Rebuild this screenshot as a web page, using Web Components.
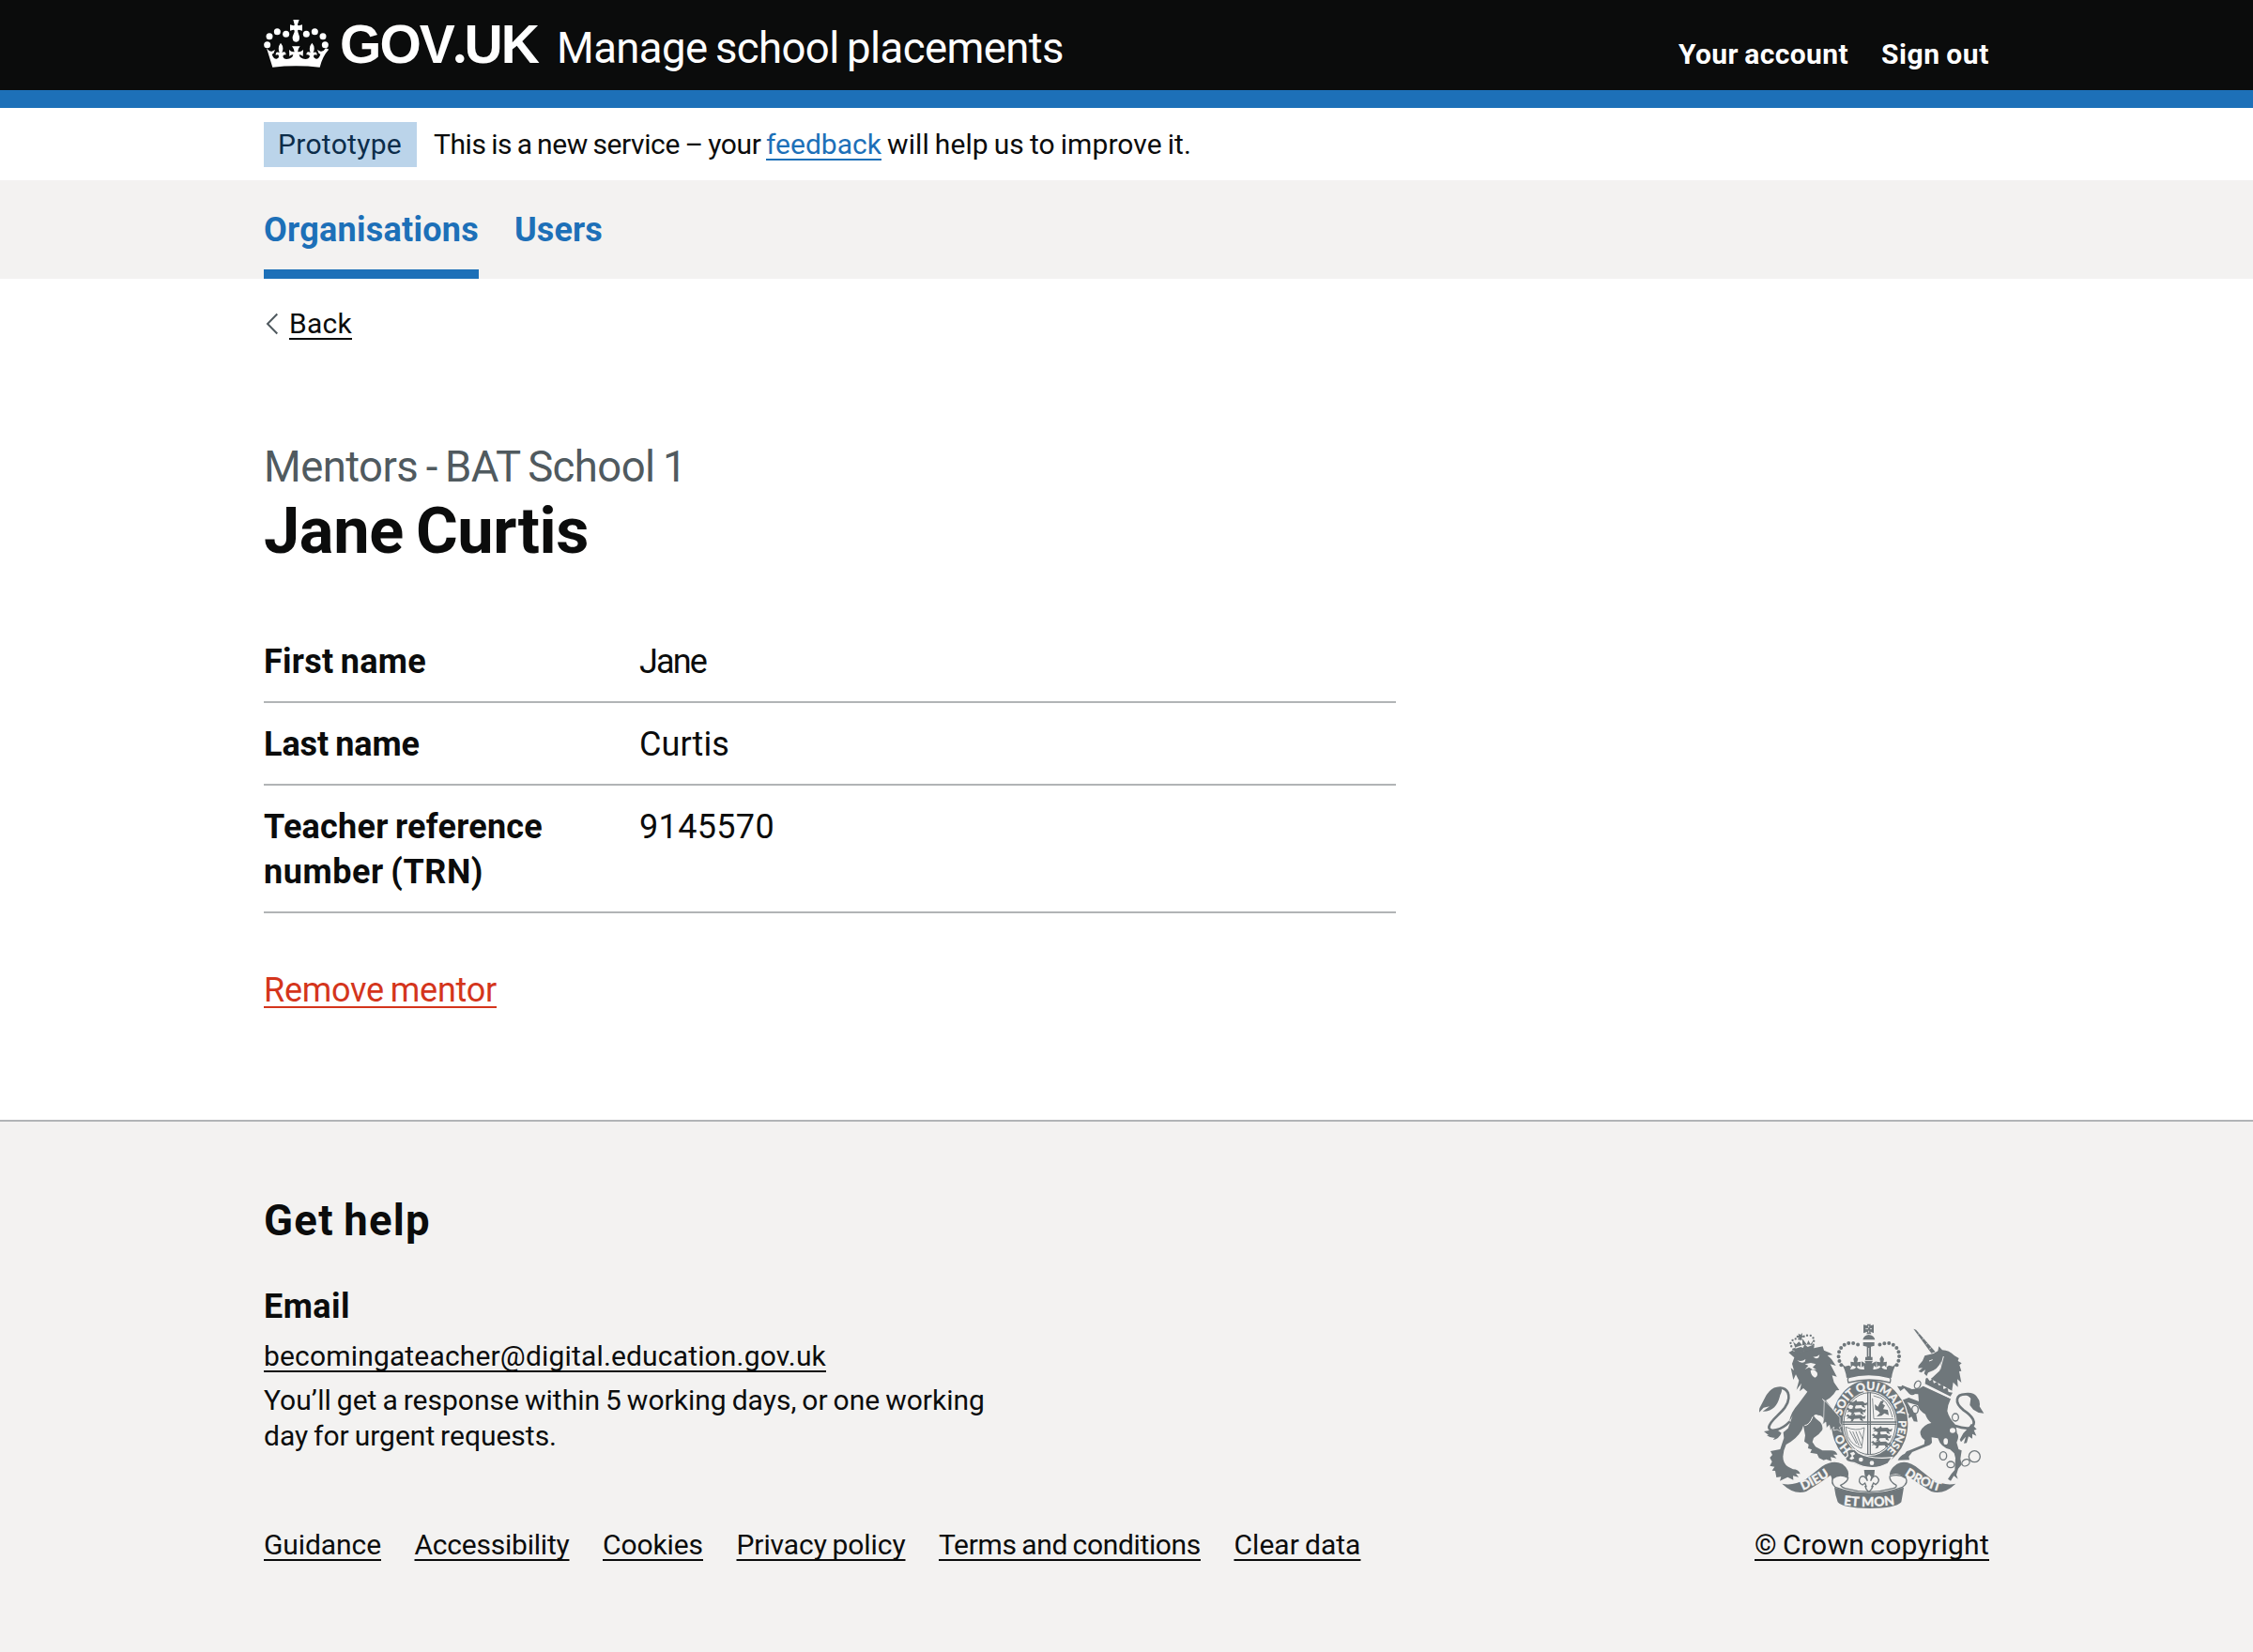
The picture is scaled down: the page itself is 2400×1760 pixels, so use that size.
<!DOCTYPE html>
<html lang="en">
<head>
<meta charset="utf-8">
<title>Jane Curtis - Manage school placements</title>
<style>
body { margin: 0; background: #fff; color: #0b0c0c; font-family: Roboto, "Liberation Sans", sans-serif; font-size: 36px; }
</style>
</head>
<body>
<placements-page></placements-page>

<script>
const define = (name, html, setup) => {
  const template = document.createElement('template');
  template.innerHTML = html.trim();
  customElements.define(name, class extends HTMLElement {
    constructor() {
      super();
      this.attachShadow({ mode: 'open' }).append(template.content.cloneNode(true));
    }
    connectedCallback() { if (setup) setup.call(this, this.shadowRoot); }
  });
};

/* A single line of text tracked to a given measure. */
define('fit-text', `
<style>
:host { display: inline-block; flex: none; }
span { display: inline-block; white-space: pre; vertical-align: top; word-spacing: -0.05em; }
:host([link]) span { text-decoration: underline; text-decoration-thickness: 2px; text-underline-offset: var(--uo, 5px); text-decoration-skip-ink: none; }
</style><span><slot></slot></span>`, function (root) {
  const span = root.querySelector('span');
  const target = +this.getAttribute('w');
  const count = this.textContent.length;
  const spacing = (target - span.getBoundingClientRect().width) / count;
  span.style.letterSpacing = spacing.toFixed(3) + 'px';
});

define('crown-logo', `
<style>:host { display: block; width: 69px; height: 51px; flex: none; } svg { display: block; width: 100%; height: 100%; }</style>
<svg viewBox="32 62 207 153" fill="#fff">
  <circle cx="43" cy="142" r="10.5"/><circle cx="50" cy="115" r="10.5"/><circle cx="75" cy="100" r="10.5"/><circle cx="103" cy="108" r="10.5"/>
  <circle cx="228" cy="142" r="10.5"/><circle cx="221" cy="115" r="10.5"/><circle cx="195" cy="100" r="10.5"/><circle cx="168" cy="108" r="10.5"/>
  <path d="M126 62H145L140 77Q140 81 144 81L155 78V97L143 94Q139 94 141 101L146 116Q148 133 135 133Q122 133 124 116L130 101Q131 94 127 94L116 97V78L127 81Q131 81 130 77Z"/>
  <path d="M60 214L41 153Q50 166 58 163L68 158L63 170L58 172Q63 188 73 187Q81 185 80 178Q79 172 70 175Q70 161 82 167Q75 150 86 136Q98 150 90 167Q102 161 103 174Q94 172 93 179Q95 188 105 188Q124 187 126 174Q119 173 114 179L113 158Q119 166 130 165Q130 157 122 147H148Q140 157 141 165Q151 166 158 158L157 179Q151 173 145 174Q147 187 165 188Q176 188 179 179Q178 172 168 174Q169 161 181 167Q174 150 186 136Q198 150 190 167Q202 161 202 175Q193 172 191 178Q190 185 199 187Q208 188 213 172L208 170L203 158L213 163Q222 166 230 153L240 157Q220 178 211 214Q135 206 60 214Z"/>
</svg>`);

define('royal-arms', `
<style>
:host { display: block; width: 240px; height: 198px; }
svg { display: block; width: 100%; height: 100%; }
text { font-family: Lato, sans-serif; font-weight: 900; fill: #f3f2f1; stroke: #f3f2f1; stroke-width: .8; text-anchor: middle; }
</style>
<svg viewBox="72 60 720 594" fill="#6f777b">
  <defs>
    <path id="motto" pathLength="100" d="M425 485A92 106 0 0 1 425 273A92 106 0 0 1 425 485"/>
    <path id="dieu" d="M192 601Q252 580 316 533"/>
    <path id="mon" d="M325 637Q424 654 522 636"/>
    <path id="droit" d="M519 532Q582 582 668 601"/>
    <path id="beast" d="M0 8L7 3L12 8L20 6L27 0L30 6L48 5L55 11L64 8L60 18L52 17L56 26L46 22L44 17L26 18L22 26L14 28L18 20L10 16L2 18L8 12Z"/>
  </defs>

  <!-- lion -->
  <path fill="none" stroke="#6f777b" stroke-width="8" d="M118 271C148 258 168 272 166 299C163 340 108 362 103 391C104 410 142 402 170 373"/>
  <path d="M142 266C112 260 104 278 94 290L73 331L71 345L86 329L105 325L83 341C116 342 130 320 137 296C140 283 148 276 142 266ZM103 402L87 405L102 417L96 418Q108 427 122 425L116 432Q136 428 143 410L132 402Z"/>
  <path d="M166 153L178 146L192 154L250 138L275 133L279 146L297 154L307 160L290 162L303 174L317 195L299 190L308 207L320 230L305 226L311 248L328 273L318 274L310 286L298 298L285 306L305 332L330 361L330 378L337 388L328 392L334 407L321 399L310 402L311 390L300 401L296 385L287 393L285 375L275 382L278 365Q273 353 260 353Q253 348 246 355Q252 366 262 371Q276 381 274 399Q266 414 246 426L242 439L252 454L274 466L298 466Q316 464 322 479L309 479L319 491L300 487L303 500L286 494L278 497L263 490L257 477L235 473L240 463L228 459L230 447L216 437L219 418L213 386Q204 422 158 447L151 466L148 485Q148 508 165 518L180 526Q198 526 203 541L189 539L198 551L180 547L181 560L163 551L138 563L142 550L127 552L123 531L113 530L121 518L106 515L113 502L106 489L114 480L108 468L139 462L151 426L149 408L164 395L179 354L168 374Q172 344 197 317L226 278L213 267L201 277L207 251L191 272L199 242L189 223L181 240L173 202L183 210L177 189L184 169Z"/>
  <path fill="#f3f2f1" d="M193 177Q207 184 220 174L218 182Q206 190 193 177ZM244 166Q254 169 265 160L262 169Q253 176 244 166ZM218 190L237 186L253 190L243 200L255 208L242 207L231 200L218 207L229 195ZM236 211Q246 202 257 217Q261 229 250 233Q238 229 236 211Z"/>
  <path fill="none" stroke="#f3f2f1" stroke-width="3" d="M274 301Q295 322 303 351L321 373M243 358Q233 385 217 386"/>
  <path d="M181 140Q220 121 248 131L246 143Q212 148 188 158ZM190 127L180 118L188 140L205 135L212 138L217 127L227 135L240 130L245 114L236 126L229 114L224 127L210 109L210 130L199 118ZM197 92L204 96L210 90L209 98L216 102L208 105L209 113L202 113L200 105L191 105L192 98L198 99Z"/>
  <path fill="none" stroke="#6f777b" stroke-width="7" stroke-linecap="round" stroke-dasharray="0 11" d="M181 143Q168 125 174 119Q183 105 203 110M245 128Q251 104 235 98Q219 96 210 105"/>

  <!-- unicorn -->
  <path d="M565 77L573 80L635 151L622 155Z"/>
  <path fill="none" stroke="#f3f2f1" stroke-width="2" d="M580 94L584 92M593 111L597 108M605 127L610 123M615 142L622 137"/>
  <path d="M629 156L643 148L646 133L657 145Q679 145 696 163L710 171L707 180L719 187L712 193L718 212L711 213L718 249L705 238L707 263L692 248L687 281L665 262L648 261L615 241L625 233L649 211L654 181Q643 209 612 217L607 228L599 220L603 208L590 217L581 213L594 202L580 203L581 195L594 179L601 163Z"/>
  <path fill="none" stroke="#f3f2f1" stroke-width="3" d="M661 165L650 207M615 180L626 176"/>
  <path d="M596 260L684 301Q674 321 673 340Q678 362 700 385L704 410Q713 419 703 440L709 462L719 466L715 493L719 511L708 524L702 544L707 557L694 547L684 563L675 557L686 541L697 528L699 490L695 475L682 463Q652 456 643 427L623 424L624 441L618 448L561 471L550 485L552 496L515 497Q521 483 537 476L543 469L599 446L601 433Q585 421 587 405Q598 382 622 378Q607 365 603 350Q582 339 579 322L545 312L558 332L574 351L578 374L566 373L559 358L546 365L551 350L540 342L533 322L522 319L527 306L550 297L582 309L580 286L551 284L535 267L523 276L513 260L526 262L529 257L560 270L583 268Z"/>
  <path fill="#f3f2f1" stroke="#f3f2f1" stroke-width="4" d="M607 232L691 279L684 298L600 258Z"/>
  <path d="M604 236L609 233L617 244L626 238L630 251L641 246L646 258L659 254L661 270L673 265L677 279L690 281L683 293L602 253Z"/>
  <path fill="none" stroke="#6f777b" stroke-width="8" d="M698 387Q726 397 745 394C773 379 751 354 725 337C694 313 699 284 735 286Q752 289 760 310"/>
  <path d="M730 282Q757 279 767 293Q780 308 776 325L790 347L773 345L756 335L745 321L748 299ZM750 380L767 398L758 401L766 419L753 413L753 428L741 421L735 442L726 443L732 422L717 439L713 431L724 411L739 395Z"/>
  <g fill="none" stroke="#6f777b" stroke-width="4"><ellipse cx="578" cy="256" rx="9" ry="13" transform="rotate(28 578 256)"/><ellipse cx="570" cy="335" rx="10" ry="13"/><ellipse cx="561" cy="280" rx="8" ry="7"/><circle cx="760" cy="485" r="18"/><ellipse cx="732" cy="505" rx="13" ry="10" transform="rotate(-30 732 505)"/><ellipse cx="684" cy="511" rx="12" ry="10"/><ellipse cx="660" cy="483" rx="11" ry="13"/><ellipse cx="699" cy="360" rx="10" ry="12"/></g>
  <g fill="#f3f2f1"><ellipse cx="690" cy="402" rx="9" ry="8"/><ellipse cx="668" cy="437" rx="7" ry="10"/><ellipse cx="569" cy="336" rx="5" ry="9"/><ellipse cx="697" cy="360" rx="6" ry="8"/></g>

  <!-- crown -->
  <path d="M405 64L418 67L416 62H429L427 67L438 64V91L427 86L430 94H415L418 86L405 91ZM403 112Q407 97 422 96Q438 97 442 112ZM404 120H440V131L429 134V167H434V177H411V167H416V134L404 131Z"/>
  <path stroke="#f3f2f1" stroke-width="2.5" d="M412 77H420M426 77H432M422 67V73M422 83V89M422 138V165" fill="none"/>
  <path fill="none" stroke="#6f777b" stroke-width="12" stroke-linecap="round" stroke-dasharray="0 14.5" d="M334 193C313 155 334 119 371 123Q387 126 398 132M512 193C531 155 511 119 474 123Q458 126 447 132"/>
  <path d="M333 185L346 197L358 194Q370 198 362 207Q380 207 381 199L371 194L365 200L364 182L375 184L373 173L380 163L388 173L385 184L397 182L395 200L388 194L384 199Q388 209 408 207L406 195L399 200V181L412 188L409 179H435L431 188L446 181V200L438 195L436 207Q452 209 460 199L454 194L449 200L447 182L459 184L457 173L464 163L471 173L469 184L480 182L478 200L472 194L463 199Q467 208 480 207Q477 197 487 194L499 197L512 185Q497 211 495 234Q422 214 351 234Q348 206 333 185Z"/>

  <!-- garter and shield -->
  <ellipse cx="425" cy="380" rx="126" ry="142" fill="#f3f2f1"/>
  <ellipse cx="425" cy="380" rx="122" ry="139"/>
  <path fill="#f3f2f1" stroke="#6f777b" stroke-width="4" d="M357 233Q422 214 488 233Q494 236 490 249Q425 231 357 249Q353 237 357 233Z"/>
  <ellipse cx="425" cy="380" rx="87" ry="103" fill="#f3f2f1"/>
  <ellipse cx="425" cy="380" rx="83" ry="99" fill="none" stroke="#6f777b" stroke-width="3"/>
  <path fill="none" stroke="#6f777b" stroke-width="4" d="M419 280V480M427 280V480M339 375H511M339 382H511"/>
  <g>
    <use href="#beast" x="355" y="304"/><use href="#beast" x="350" y="326"/><use href="#beast" x="349" y="347"/>
    <use href="#beast" x="434" y="388"/><use href="#beast" x="431" y="409"/><use href="#beast" x="429" y="432"/>
    <path d="M441 318L451 326L460 308L471 306L466 317L474 322L468 334L483 336L486 353L472 347L463 355L447 358L458 346L450 338L443 336Z"/>
  </g>
  <path fill="none" stroke="#6f777b" stroke-width="2.5" d="M434 299L438 365H501M437 291Q485 298 498 360M348 391L355 421Q370 451 399 459L408 393Q383 406 348 391ZM361 403L383 444M371 405L391 451M381 405L398 450M391 404L403 430"/>
  <text font-size="37"><textPath href="#motto" startOffset="15%">HO</textPath></text>
  <text font-size="37"><textPath href="#motto" startOffset="35.5%">SOIT</textPath></text>
  <text font-size="37"><textPath href="#motto" startOffset="49%">QUI</textPath></text>
  <text font-size="37"><textPath href="#motto" startOffset="61%">MAL</textPath></text>
  <text font-size="33"><textPath href="#motto" startOffset="69.5%">Y</textPath></text>
  <text font-size="34"><textPath href="#motto" startOffset="82%">PENSE</textPath></text>
  <path d="M352 468Q360 458 379 464L389 474Q431 496 497 488L483 508Q431 535 375 505Q348 505 347 490L355 482Z" stroke="#f3f2f1" stroke-width="4"/>
  <g fill="#f3f2f1"><circle cx="397" cy="495" r="7"/><circle cx="432" cy="506" r="7"/><path d="M362 474L374 470L379 477L371 483L376 491L367 496L360 492L368 484Z"/></g>
  <!-- lion's forepaw over the garter -->
  <path stroke="#f3f2f1" stroke-width="2" d="M280 305L305 332L330 361L330 378L337 388L328 392L334 407L321 399L310 402L311 390L300 401L296 385L287 393L285 375L275 382L278 365Z"/>

  <!-- ribbon -->
  <path d="M407 528H441L439 550H410Z"/>
  <path fill="#f3f2f1" stroke="#6f777b" stroke-width="4" d="M423 539L432 550L428 563Q438 541 449 551Q461 563 444 575L437 570L432 581H435L431 589L422 599L414 589L411 581H414L410 570L402 576Q385 567 395 552Q408 541 418 563L414 550Z"/>
  <path d="M145 572Q180 580 221 558L273 517Q306 494 338 509Q363 528 356 553Q341 543 325 548Q303 552 304 576Q308 560 300 545Q260 574 222 597Q183 609 145 572Z"/>
  <path d="M700 572Q665 580 624 558L572 517Q539 494 512 509Q486 528 489 546Q504 538 520 543Q540 552 540 576Q536 560 544 545Q584 574 622 597Q661 609 700 572Z"/>
  <path fill="#f3f2f1" stroke="#6f777b" stroke-width="4" d="M356 553Q328 538 308 555Q300 569 315 583Q423 624 530 583Q549 569 541 555Q517 538 489 549Q488 565 510 577Q512 585 500 587Q423 609 346 587Q336 584 332 577Q355 566 356 553Z"/>
  <path d="M312 584Q424 621 534 584Q530 609 526 631Q508 651 425 651Q338 650 323 631Q315 609 312 584Z"/>
  <text font-size="41"><textPath href="#dieu" startOffset="49%">DIEU</textPath></text>
  <text font-size="42"><textPath href="#mon" startOffset="50%">ET MON</textPath></text>
  <text font-size="40"><textPath href="#droit" startOffset="50%">DROIT</textPath></text>
</svg>`);

define('service-header', `
<style>
:host { display: block; background: #0b0c0c; color: #fff; border-bottom: 19px solid #1d70b8; padding: 0 281px; }
.bar { display: flex; height: 96px; align-items: flex-start; }
crown-logo { margin-top: 20.5px; }
.logo { font-family: "Liberation Sans", Arial, sans-serif; font-size: 57px; font-weight: 700; line-height: 95px; margin-left: 12px; }
.logo .dot { font-family: Lato, sans-serif; font-weight: 900; line-height: 0; }
.service { font-size: 45.5px; line-height: 89px; padding-top: 7px; margin-left: 20px; }
nav { display: flex; gap: 35px; margin-left: auto; font-size: 30px; font-weight: 700; line-height: 77px; padding-top: 19px; }
</style>
<div class="bar">
  <crown-logo></crown-logo>
  <fit-text class="logo" w="211">GOV<span class="dot">.</span>UK</fit-text>
  <fit-text class="service" w="540">Manage school placements</fit-text>
  <nav><fit-text w="181">Your account</fit-text><fit-text w="115">Sign out</fit-text></nav>
</div>`);

define('phase-banner', `
<style>
:host { display: flex; height: 77px; align-items: center; padding: 0 281px; font-size: 30px; line-height: 48px; }
.tag { background: #bbd4ea; color: #0c2d4a; padding: 0 15px; width: 133px; height: 48px; margin-right: 18px; }
a { color: #1d70b8; display: contents; }
</style>
<span class="tag"><fit-text w="132">Prototype</fit-text></span><fit-text w="354">This is a new service – your </fit-text><a><fit-text link w="123">feedback</fit-text></a><fit-text w="330"> will help us to improve it.</fit-text>`);

define('primary-nav', `
<style>
:host { display: flex; gap: 38px; height: 105px; padding: 0 281px; background: #f3f2f1; color: #1d70b8; font-weight: 700; }
a { display: flex; box-sizing: border-box; height: 105px; line-height: 106px; }
a.current { box-shadow: inset 0 -10px #1d70b8; }
</style>
<a class="current"><fit-text w="229">Organisations</fit-text></a><a><fit-text w="94">Users</fit-text></a>`);

define('back-link', `
<style>
:host { display: flex; padding-top: 29px; font-size: 30px; line-height: 38px; }
svg { width: 14px; height: 24px; margin: 7px 11px 0 2px; }
</style>
<svg viewBox="0 0 14 24" fill="none" stroke="#505a5f" stroke-width="2"><path d="M12.3 1.5L2 12L12.3 22.5"/></svg>
<fit-text link w="67">Back</fit-text>`);

define('summary-row', `
<style>
:host { display: flex; padding: 20px 0 18px; border-bottom: 2px solid #b1b4b6; line-height: 48px; }
.key { width: 400px; font-weight: 700; display: flex; flex-direction: column; align-items: flex-start; }
.value { display: flex; align-items: flex-start; }
</style>
<div class="key"><slot name="key"></slot></div><div class="value"><slot></slot></div>`);

define('mentor-details', `
<style>
:host { display: block; padding: 0 281px 115px; }
.caption { display: block; margin-top: 105px; font-size: 45.5px; line-height: 58px; color: #505a5f; }
h1 { margin: 0 0 55.5px; font-size: 68.5px; line-height: 78px; font-weight: 700; display: flex; }
.summary { width: 1206px; }
.remove { display: flex; padding-top: 58px; height: 47px; line-height: 48px; color: #d4351c; --uo: 5px; }
</style>
<back-link></back-link>
<fit-text class="caption" w="450">Mentors - BAT School 1</fit-text>
<h1><fit-text w="346">Jane Curtis</fit-text></h1>
<div class="summary">
  <summary-row><fit-text slot="key" w="173">First name</fit-text><fit-text w="71">Jane</fit-text></summary-row>
  <summary-row><fit-text slot="key" w="166">Last name</fit-text><fit-text w="96">Curtis</fit-text></summary-row>
  <summary-row><fit-text slot="key" w="297">Teacher reference</fit-text><fit-text slot="key" w="234">number (TRN)</fit-text><fit-text w="144">9145570</fit-text></summary-row>
</div>
<a class="remove"><fit-text link w="248">Remove mentor</fit-text></a>`);

define('service-footer', `
<style>
:host { display: flex; justify-content: space-between; align-items: flex-end; box-sizing: border-box; height: 567px; padding: 0 281px 95px; border-top: 2px solid #b1b4b6; background: #f3f2f1; font-size: 30px; line-height: 38px; --uo: 4.5px; }
.help { display: flex; flex-direction: column; align-items: flex-start; }
.title { font-size: 45.5px; line-height: 58px; font-weight: 700; }
.sub { font-size: 36px; line-height: 48px; font-weight: 700; margin-top: 38px; }
.mail { margin-top: 10px; }
.note { margin-top: 9px; display: flex; flex-direction: column; align-items: flex-start; }
.links { display: flex; gap: 35.5px; margin-top: 78px; }
.crown { display: flex; flex-direction: column; align-items: center; gap: 19px; }
</style>
<div class="help">
  <fit-text class="title" w="178">Get help</fit-text>
  <fit-text class="sub" w="92">Email</fit-text>
  <fit-text class="mail" link w="599">becomingateacher@digital.education.gov.uk</fit-text>
  <div class="note"><fit-text w="768">You’ll get a response within 5 working days, or one working</fit-text><fit-text w="312">day for urgent requests.</fit-text></div>
  <div class="links"><fit-text link w="125">Guidance</fit-text><fit-text link w="165">Accessibility</fit-text><fit-text link w="107">Cookies</fit-text><fit-text link w="180">Privacy policy</fit-text><fit-text link w="279">Terms and conditions</fit-text><fit-text link w="135">Clear data</fit-text></div>
</div>
<div class="crown"><royal-arms></royal-arms><fit-text link w="250">© Crown copyright</fit-text></div>`);

define('placements-page', `
<style>:host { display: flex; flex-direction: column; min-height: 1760px; }</style>
<service-header></service-header>
<phase-banner></phase-banner>
<primary-nav></primary-nav>
<mentor-details></mentor-details>
<service-footer></service-footer>`);
</script>
</body>
</html>
